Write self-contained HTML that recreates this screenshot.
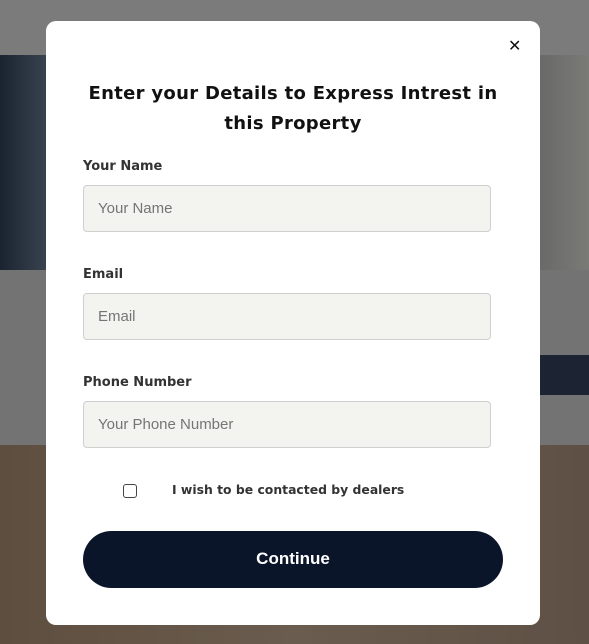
<!DOCTYPE html>
<html><head><meta charset="utf-8"><style>
*{margin:0;padding:0;box-sizing:border-box}
body{width:589px;height:644px;position:relative;overflow:hidden;background:#7d7d7d;font-family:"DejaVu Sans","Liberation Sans",sans-serif}
.bg{position:absolute}
.modal{position:absolute;left:46px;top:21px;width:494px;height:604px;background:#fff;border-radius:10px}
.x{position:absolute;left:462px;top:15px;font-size:16px;font-weight:bold;color:#111}
h1{position:absolute;left:20px;width:454px;top:58px;text-align:center;font-size:18px;line-height:30px;font-weight:bold;color:#111;letter-spacing:0.3px}
.lbl{position:absolute;left:37px;font-size:13px;font-weight:bold;color:#333}
.in{position:absolute;left:37px;width:408px;height:47px;background:#f3f3ef;border:1px solid #cfcfcf;border-radius:4px;font-family:"Liberation Sans",sans-serif;font-size:15px;color:#757575;padding:14px 0 0 14px}
.cb{position:absolute;left:77px;top:463px;width:14px;height:14px;border:1.5px solid #444;border-radius:3px}
.cbt{position:absolute;left:126px;top:461px;font-size:12.4px;font-weight:bold;color:#333}
.btn{position:absolute;left:37px;top:510px;width:420px;height:57px;background:#0b1529;border-radius:29px;color:#fff;font-family:"Liberation Sans",sans-serif;font-weight:bold;font-size:17px;text-align:center;line-height:55px}
</style></head><body>
<div class="bg" style="left:0;top:55px;width:589px;height:215px;background:linear-gradient(90deg,#1a2430,#3a4450 8%,#6a6a6a 92%,#7a7a76)"></div>
<div class="bg" style="left:0;top:270px;width:589px;height:175px;background:#737373"></div>
<div class="bg" style="left:540px;top:355px;width:49px;height:40px;background:#1c2433"></div>
<div class="bg" style="left:0;top:445px;width:589px;height:199px;background:linear-gradient(90deg,#5e4e40,#6a5c4e 50%,#5e5044)"></div>
<div class="bg" style="left:0;top:0;width:589px;height:55px;background:#7b7b7b"></div>
<div class="modal">
<div class="x">✕</div>
<h1>Enter your Details to Express Intrest in this Property</h1>
<div class="lbl" style="top:138px">Your Name</div>
<div class="in" style="top:164px">Your Name</div>
<div class="lbl" style="top:246px">Email</div>
<div class="in" style="top:272px">Email</div>
<div class="lbl" style="top:354px">Phone Number</div>
<div class="in" style="top:380px">Your Phone Number</div>
<div class="cb"></div>
<div class="cbt">I wish to be contacted by dealers</div>
<div class="btn">Continue</div>
</div>
</body></html>
